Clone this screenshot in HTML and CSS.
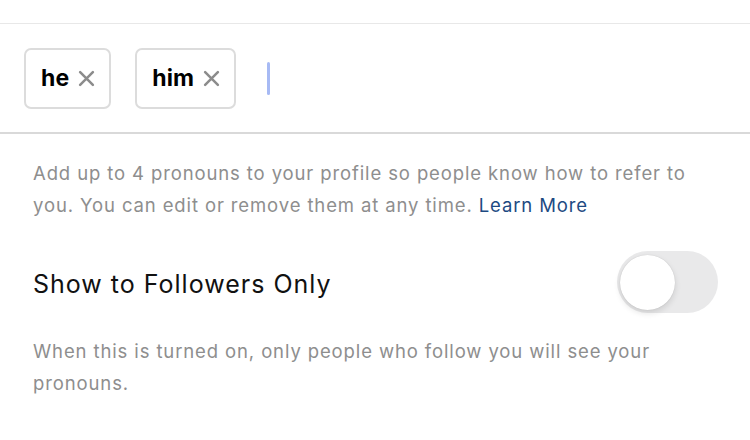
FILE: index.html
```html
<!DOCTYPE html>
<html>
<head>
<meta charset="utf-8">
<link rel="stylesheet" href="styles.css">
</head>
<body>
<div class="page">
  <div class="topbar"></div>
  <div class="chips-row">
    <div class="chip"><span class="chip-label">he</span><svg class="chip-x" viewBox="0 0 16 16"><path d="M2 2L14 14M14 2L2 14"/></svg></div>
    <div class="chip"><span class="chip-label">him</span><svg class="chip-x" viewBox="0 0 16 16"><path d="M2 2L14 14M14 2L2 14"/></svg></div>
    <div class="cursor"></div>
  </div>
  <p class="help">Add up to 4 pronouns to your profile so people know how to refer to you. You can edit or remove them at any time. <span class="link">Learn More</span></p>
  <div class="setting">
    <span class="setting-label">Show to Followers Only</span>
    <div class="toggle"><div class="knob"></div></div>
  </div>
  <p class="note">When this is turned on, only people who follow you will see your pronouns.</p>
</div>
</body>
</html>
```

FILE: styles.css
```css
html, body {
  margin: 0;
  padding: 0;
  background: #ffffff;
}
body {
  font-family: Inter, "Liberation Sans", sans-serif;
  -webkit-font-smoothing: antialiased;
}
.page {
  width: 750px;
  height: 440px;
  overflow: hidden;
}
.topbar {
  height: 23px;
  border-bottom: 1px solid #e8e8e8;
}
.chips-row {
  display: flex;
  align-items: center;
  padding-left: 24px;
  gap: 24px;
  border-bottom: 2px solid #d9d9d9;
  box-sizing: border-box;
  height: 110px;
}
.chip {
  height: 61px;
  box-sizing: border-box;
  border: 2px solid #dcdcdc;
  border-radius: 7px;
  display: flex;
  align-items: center;
  padding: 0 14px 0 15px;
  gap: 9px;
}
.chip-label {
  font-size: 23px;
  font-weight: 700;
  color: #000;
  letter-spacing: 0.1px;
}
.chip-x {
  width: 17px;
  height: 17px;
  stroke: #8c8c8c;
  stroke-width: 2.4;
  stroke-linecap: round;
  fill: none;
}
.cursor {
  width: 3px;
  height: 33px;
  border-radius: 2px;
  background: #a7baf4;
  margin-left: 7px;
}
.help {
  margin: 23px 0 0 0;
  padding: 0 36px 0 33px;
  font-size: 18.5px;
  line-height: 32px;
  letter-spacing: 0.88px;
  color: #8e8e8e;
}
.link {
  color: #1d4a82;
}
.setting {
  display: flex;
  align-items: center;
  justify-content: space-between;
  padding: 0 33px 0 33px;
  margin-top: 30px;
  height: 62px;
}
.setting-label {
  font-size: 25px;
  color: #111;
  letter-spacing: 1px;
  margin-top: 4px;
}
.toggle {
  width: 101px;
  height: 62px;
  border-radius: 31px;
  background: #e9e9ea;
  position: relative;
  margin-right: -1px;
}
.knob {
  position: absolute;
  left: 3px;
  top: 4px;
  width: 55px;
  height: 55px;
  border-radius: 50%;
  background: #fff;
  box-shadow: 0 3px 6px rgba(0,0,0,0.12), 0 0 1px rgba(0,0,0,0.18);
}
.note {
  margin: 22px 0 0 0;
  padding: 0 36px 0 33px;
  font-size: 18.5px;
  line-height: 32px;
  letter-spacing: 0.88px;
  color: #8e8e8e;
}
```
